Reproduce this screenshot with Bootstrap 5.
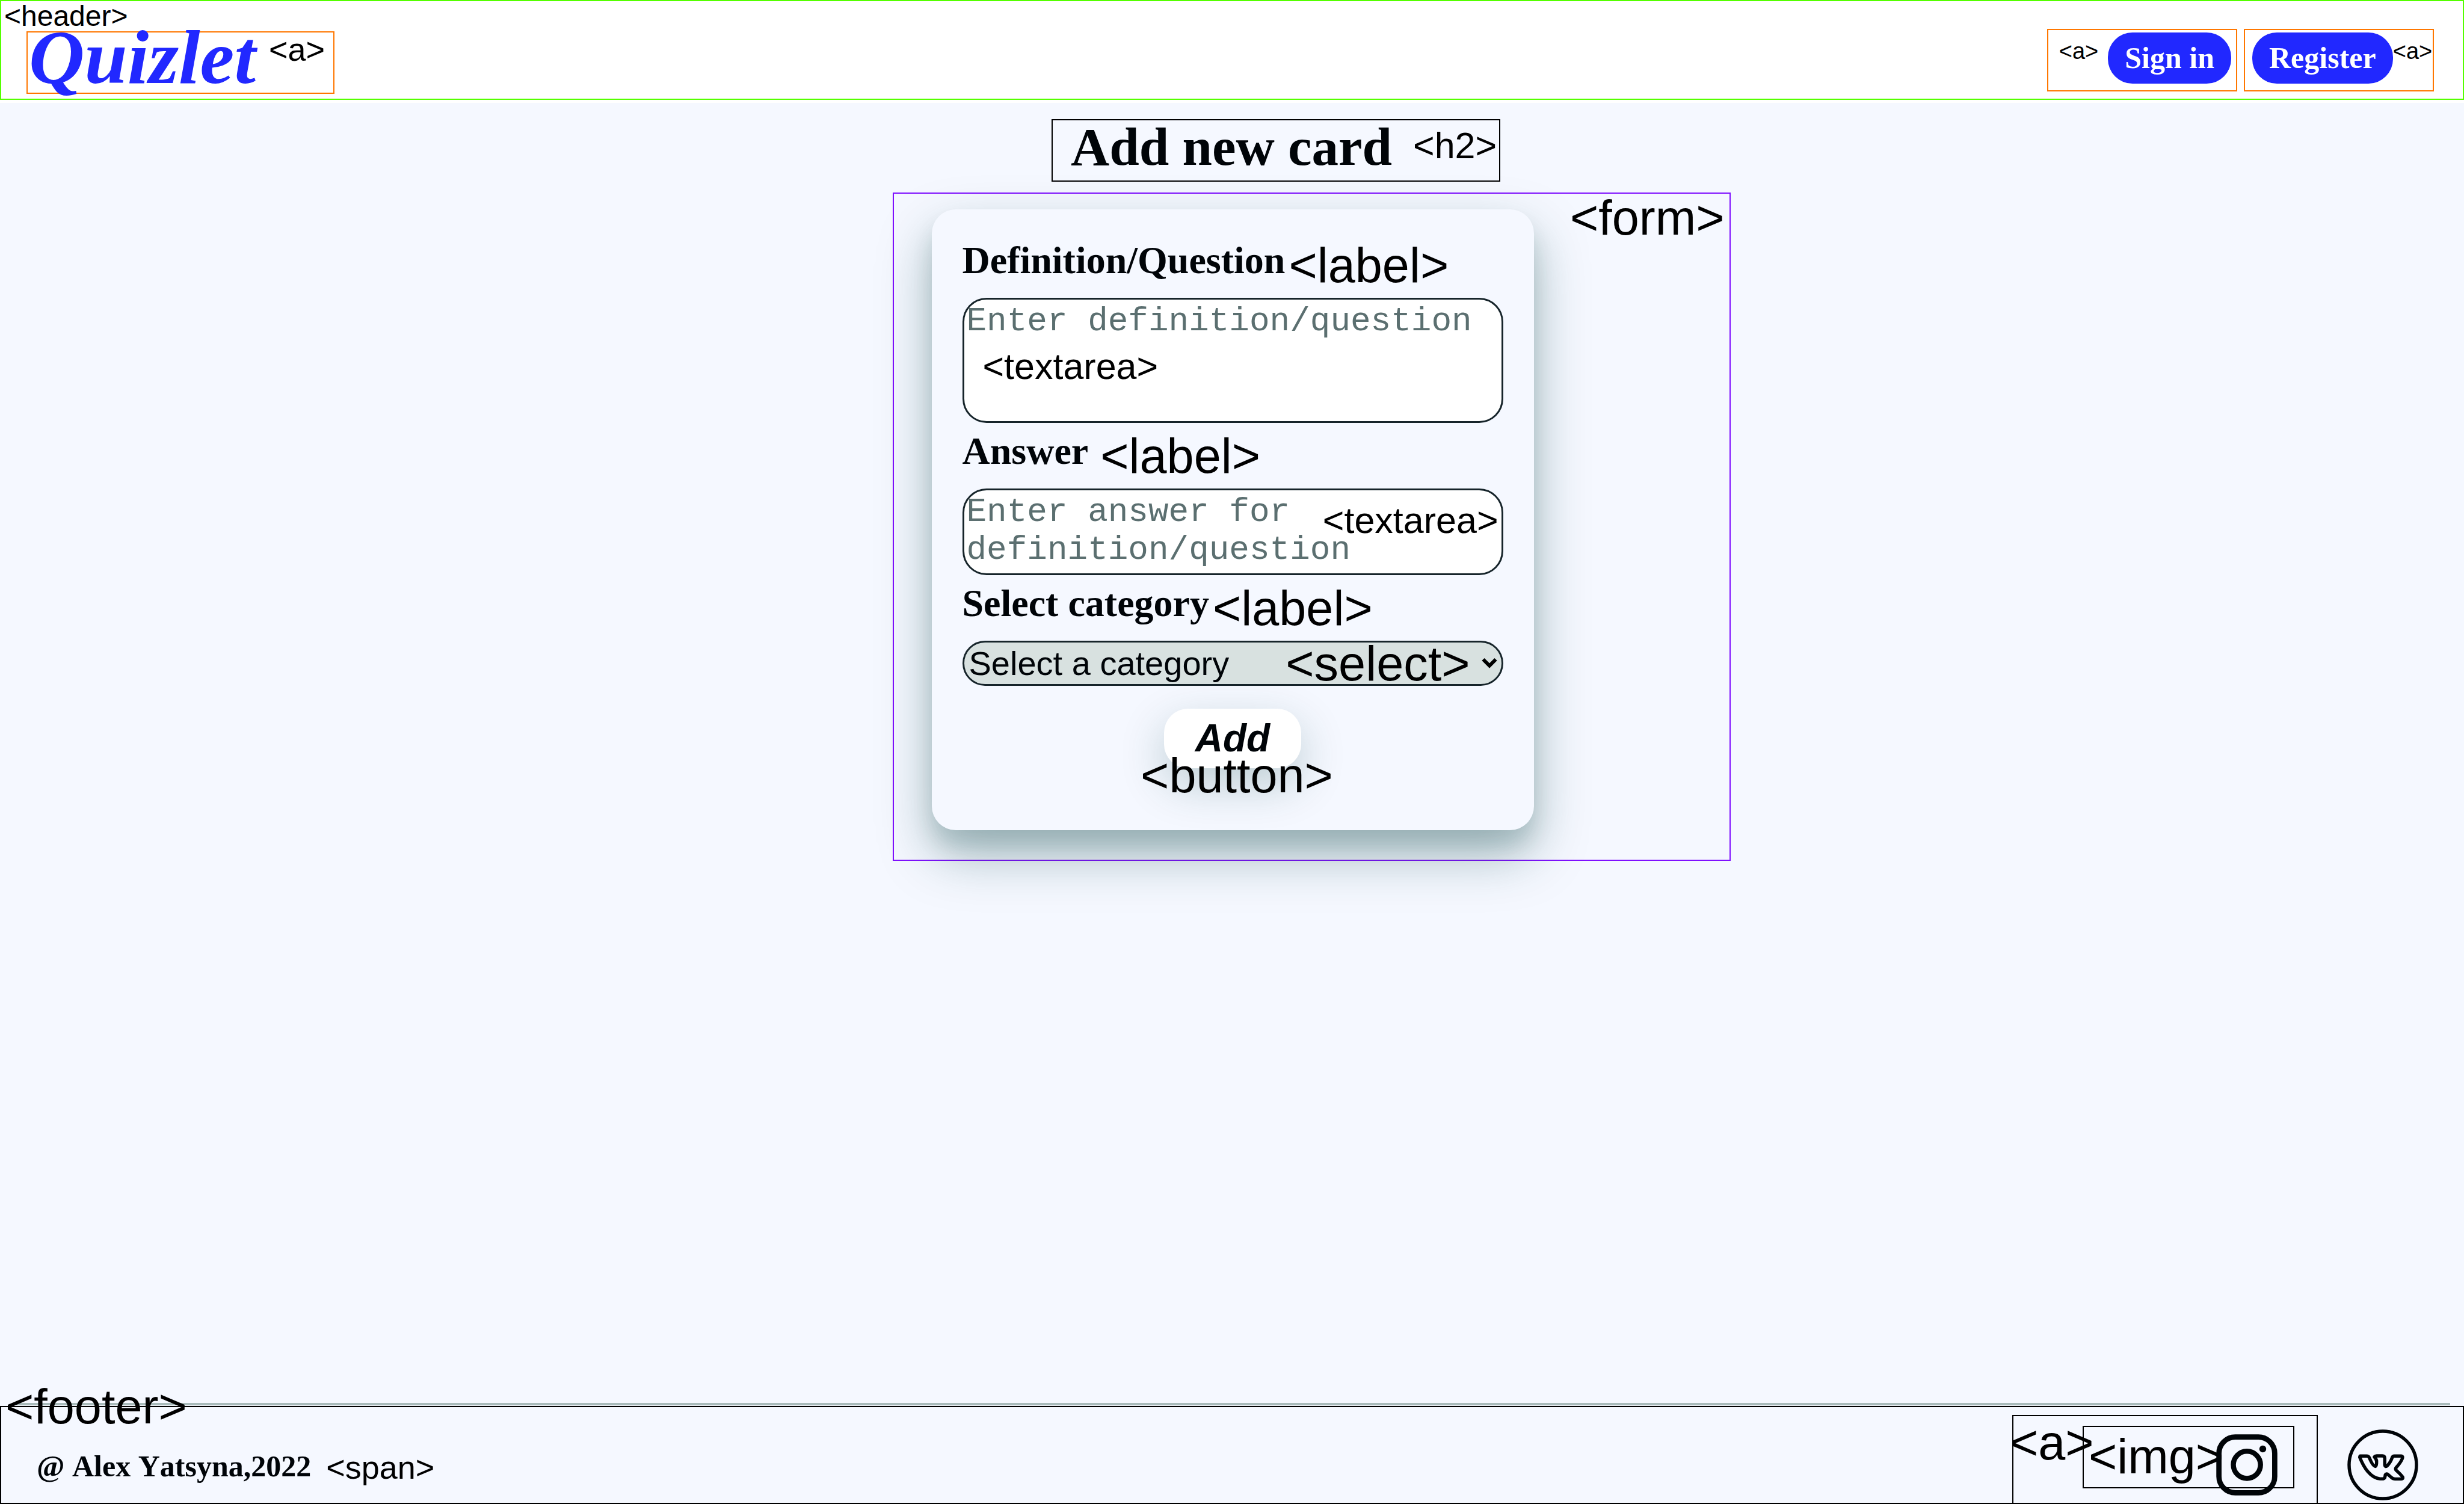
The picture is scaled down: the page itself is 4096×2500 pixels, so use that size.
<!DOCTYPE html>
<html lang="en">
<head>
<meta charset="utf-8">
<meta name="viewport" content="width=device-width, initial-scale=1">
<title>Quizlet - Add new card</title>
<link href="https://cdn.jsdelivr.net/npm/bootstrap@5.3.0/dist/css/bootstrap.min.css" rel="stylesheet">
<style>
  body { font-family: "Liberation Serif", "Times New Roman", serif; color: #000408; background: #fff; }

  /* element-name annotations */
  .tag { font-family: "Liberation Sans", Arial, sans-serif; font-weight: 400; font-style: normal; color: #000; white-space: nowrap; pointer-events: none; }
  .tag-xs { font-size: 38px; line-height: 70px; }
  .tag-sm { font-size: 48px; line-height: 54px; }
  .tag-md { font-size: 54px; line-height: 56px; }
  .tag-lg { font-size: 61px; line-height: 60px; }
  .tag-xl { font-size: 81px; line-height: 80px; }

  .site-header { border: 2px solid #55ff00; min-height: 165px; padding: 46px 48px 8px 42px; margin-bottom: 5px; }
  .header-tag { top: -2px; left: 5px; }
  .link-box { border: 2px solid #ff7700; height: 104px; }
  .brand-box { width: 512px; padding-left: 2px; gap: 22px; margin-top: 4px; }
  .brand-link { font-size: 128px; line-height: 82px; font-weight: 700; font-style: italic; color: #2128ff; text-decoration: none; }
  .nav-boxes { gap: 11px; }
  .auth-box { width: 316px; }
  .auth-box.box-in { gap: 16px; padding-right: 8px; }
  .auth-box.box-reg { padding-left: 12px; }
  .pill { font-size: 50px; line-height: 85px; font-weight: 700; color: #fff; background: #2128ff; border-radius: 41px; padding: 0 28px; margin-top: 4px; text-decoration: none; white-space: nowrap; }

  .page { background: #f5f8ff; padding-top: 27px; }
  .title-row { padding-left: 146px; }
  .title-box { border: 2px solid #000; width: 746px; height: 104px; padding-left: 30px; gap: 35px; }
  .title-box h2 { font-size: 89px; line-height: 88px; font-weight: 700; white-space: nowrap; }
  .title-box .tag { line-height: 84px; }

  .form-row { padding-left: 264px; margin-top: 18px; }
  .form-box { border: 2px solid #7f10ff; width: 1393px; height: 1111px; padding: 0 8px 0 63px; }
  .quiz-card { width: 1001px; height: 1032px; margin-top: 26px; padding: 38px 51px 0; background: #f5f8ff; border-radius: 40px;
    box-shadow: 0 40px 88px rgba(10, 65, 65, .35), 0 27px 34px rgba(10, 65, 65, .12); }
  .label-row { margin: 3px 0 2px; gap: 6px; }
  .label-row.wide-gap { gap: 20px; }
  .label-row label { font-size: 64px; line-height: 88px; font-weight: 700; white-space: nowrap; }
  .label-row .tag { line-height: 104px; }

  .field { display: block; width: 100%; border: 3px solid #16242a; border-radius: 40px; background: #fff; color: #000408; font-size: 56px; }
  textarea.field { font-family: "Liberation Mono", "Courier New", monospace; line-height: 63px; padding: 5px 4px; resize: none; overflow: hidden; }
  textarea.field::placeholder { color: #5b6f70; opacity: 1; }
  .field-question { height: 208px; }
  .field-answer { height: 144px; }
  select.field { font-family: "Liberation Sans", Arial, sans-serif; height: 75px; line-height: 67px; padding: 0 8px; background: #d8e1e0; appearance: none; }
  .question-tag { left: 34px; top: 84px; }
  .answer-tag { right: 8px; top: 23px; }
  .select-tag { right: 55px; top: 8px; line-height: 60px; }
  .chevron { right: 10px; top: 28px; width: 26px; height: 18px; pointer-events: none; }

  .add-wrap { margin-top: 38px; }
  .add-btn { font-family: "Liberation Sans", Arial, sans-serif; font-size: 64px; line-height: 99px; font-weight: 700; font-style: italic; color: #000408; width: 228px; height: 99px; border: 0; padding: 0; background: #fff; border-radius: 40px;
    box-shadow: 0 27px 75px rgba(10, 65, 65, .24); }
  .add-tag { top: 71px; padding-left: 14px; }

  .rule { height: 4px; background: #a9bbbb; margin: 0 23px 1px; }
  .site-footer { border: 2px solid #000; min-height: 163px; padding: 0 74px 0 59px; }
  .footer-tag { top: -41px; left: 7px; }
  .author { margin-top: 73px; gap: 25px; font-size: 50px; line-height: 50px; font-weight: 700; font-kerning: none; white-space: nowrap; }
  .author .tag { line-height: 54px; }
  .social { gap: 49px; }
  .insta-link { width: 508px; height: 146px; margin-top: 13px; border: 2px solid #000; border-bottom: 0; padding: 16px 0 0 115px; color: inherit; }
  .anchor-tag { left: -6px; top: 4px; }
  .img-box { width: 352px; height: 104px; border: 2px solid #000; padding-left: 8px; }
  .img-box .tag { line-height: 98px; }
  .insta-icon { width: 102px; height: 102px; margin: 12px 0 0 -13px; flex: none; }
  .vk-icon { width: 118px; height: 118px; margin-top: 37px; display: block; }
</style>
</head>
<body class="d-flex flex-column min-vh-100">

<header class="site-header position-relative d-flex justify-content-between align-items-start">
  <span class="tag tag-sm header-tag position-absolute">&lt;header&gt;</span>
  <div class="link-box brand-box d-flex align-items-start">
    <a class="brand-link" href="#">Quizlet</a>
    <span class="tag tag-md">&lt;a&gt;</span>
  </div>
  <nav class="nav-boxes d-flex" aria-label="Account">
    <div class="link-box auth-box box-in d-flex justify-content-end align-items-start">
      <span class="tag tag-xs">&lt;a&gt;</span>
      <a class="pill" href="#">Sign in</a>
    </div>
    <div class="link-box auth-box box-reg d-flex align-items-start">
      <a class="pill" href="#">Register</a>
      <span class="tag tag-xs">&lt;a&gt;</span>
    </div>
  </nav>
</header>

<main class="page flex-grow-1">
  <div class="title-row d-flex justify-content-center">
    <div class="title-box d-flex align-items-start">
      <h2 class="m-0">Add new card</h2>
      <span class="tag tag-lg">&lt;h2&gt;</span>
    </div>
  </div>

  <div class="form-row d-flex justify-content-center">
    <form class="form-box d-flex justify-content-between align-items-start">
      <div class="quiz-card">
        <div class="label-row d-flex align-items-start">
          <label for="question">Definition/Question</label>
          <span class="tag tag-xl">&lt;label&gt;</span>
        </div>
        <div class="position-relative">
          <textarea class="field field-question" id="question" placeholder="Enter definition/question"></textarea>
          <span class="tag tag-lg question-tag position-absolute">&lt;textarea&gt;</span>
        </div>
        <div class="label-row wide-gap d-flex align-items-start">
          <label for="answer">Answer</label>
          <span class="tag tag-xl">&lt;label&gt;</span>
        </div>
        <div class="position-relative">
          <textarea class="field field-answer" id="answer" placeholder="Enter answer for definition/question"></textarea>
          <span class="tag tag-lg answer-tag position-absolute">&lt;textarea&gt;</span>
        </div>
        <div class="label-row d-flex align-items-start">
          <label for="category">Select category</label>
          <span class="tag tag-xl">&lt;label&gt;</span>
        </div>
        <div class="position-relative">
          <select class="field" id="category">
            <option selected>Select a category</option>
          </select>
          <span class="tag tag-xl select-tag position-absolute">&lt;select&gt;</span>
          <svg class="chevron position-absolute" viewBox="0 0 26 18" fill="none" stroke="#000" stroke-width="6" aria-hidden="true"><path d="M2.500 3 L13 13.500 L23.500 3"/></svg>
        </div>
        <div class="add-wrap position-relative d-flex justify-content-center">
          <button class="add-btn" type="button">Add</button>
          <span class="tag tag-xl add-tag position-absolute start-50 translate-middle-x">&lt;button&gt;</span>
        </div>
      </div>
      <span class="tag tag-xl">&lt;form&gt;</span>
    </form>
  </div>
</main>

<div class="page pt-0"><div class="rule"></div></div>
<footer class="page site-footer position-relative d-flex justify-content-between align-items-start pt-0">
  <span class="tag tag-xl footer-tag position-absolute">&lt;footer&gt;</span>
  <div class="author d-flex align-items-start">
    <span>@ Alex Yatsyna,2022</span>
    <span class="tag tag-md">&lt;span&gt;</span>
  </div>
  <div class="social d-flex align-items-start">
    <a class="insta-link position-relative d-block text-decoration-none" href="#" aria-label="Instagram">
      <span class="img-box d-flex align-items-start">
        <span class="tag tag-xl">&lt;img&gt;</span>
        <svg class="insta-icon" viewBox="75 75 375 375" fill="none" stroke="#000408" aria-hidden="true">
          <rect x="92" y="92" width="341" height="341" rx="100" stroke-width="32"/>
          <circle cx="263" cy="262" r="83" stroke-width="31"/>
          <circle cx="360" cy="165" r="21" fill="#000408" stroke="none"/>
        </svg>
      </span>
      <span class="tag tag-xl anchor-tag position-absolute">&lt;a&gt;</span>
    </a>
    <a href="#" aria-label="VK">
      <svg class="vk-icon" viewBox="870 45 434 434" fill="none" stroke="#000408" stroke-width="20" stroke-linejoin="round" aria-hidden="true">
        <circle cx="1087" cy="262" r="206"/>
        <path d="M948 208 H988 Q1000 208 1005 219 C1015 243 1030 271 1042 271 Q1050 266 1049 240 Q1049 226 1035 213 Q1040 207 1050 207 H1084 Q1099 207 1099 222 V262 Q1101 276 1112 269 C1128 254 1138 235 1144 218 Q1148 208 1158 208 H1200 Q1212 209 1207 222 C1197 247 1181 265 1168 279 Q1162 288 1170 296 C1186 310 1200 324 1209 337 Q1213 347 1200 348 H1162 Q1149 348 1140 339 L1118 320 Q1107 313 1102 324 Q1102 345 1090 347 H1070 C1012 344 970 276 946 215 Z"/>
      </svg>
    </a>
  </div>
</footer>

<script src="https://cdn.jsdelivr.net/npm/bootstrap@5.3.0/dist/js/bootstrap.bundle.min.js"></script>
</body>
</html>
